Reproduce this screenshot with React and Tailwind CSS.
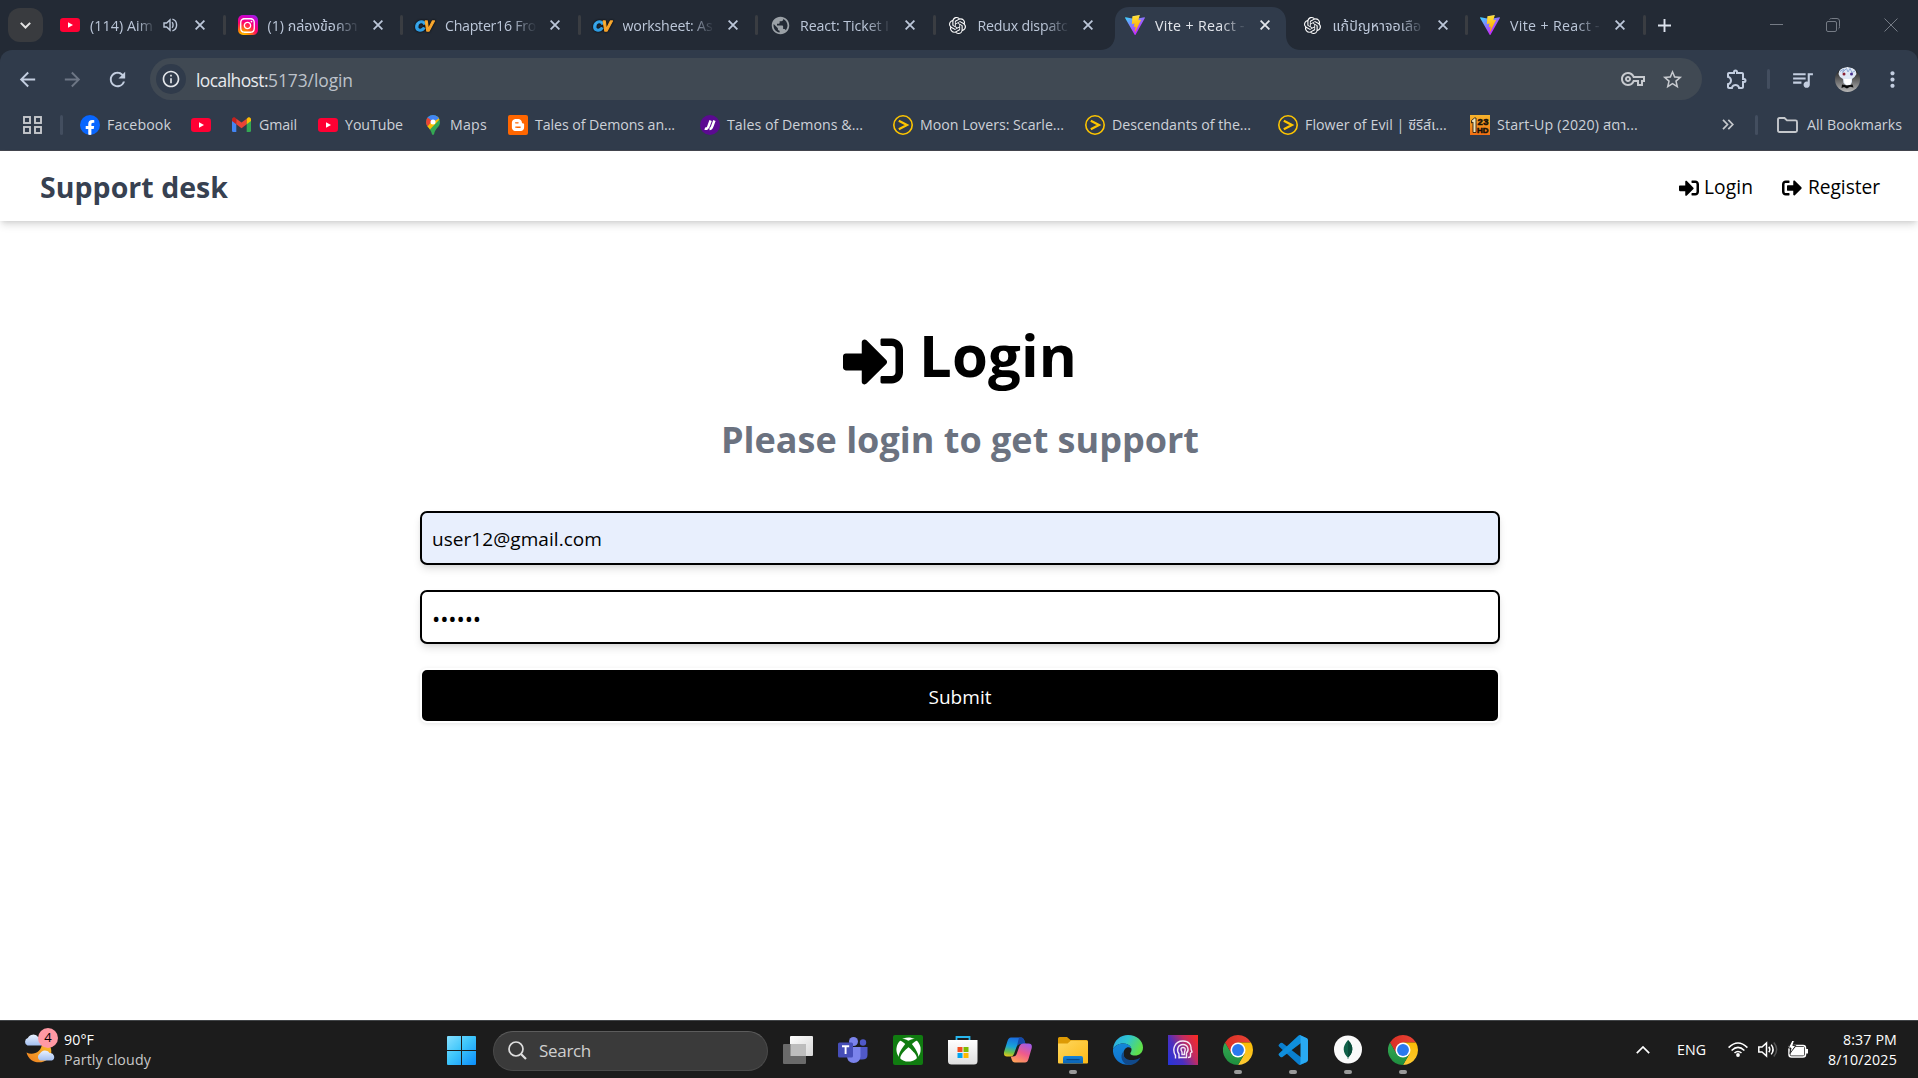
import React, { useLayoutEffect, useRef, useState } from "react";
import { FaSignInAlt, FaSignOutAlt, FaInstagram, FaFacebookF, FaXbox, FaBloggerB } from "react-icons/fa";
import { SiOpenai } from "react-icons/si";
import {
  MdPublic,
  MdArrowBack,
  MdArrowForward,
  MdRefresh,
  MdInfoOutline,
  MdStarBorder,
  MdOutlineVpnKey,
  MdOutlineExtension,
  MdQueueMusic,
  MdMoreVert,
} from "react-icons/md";

/* Single line of text whose letter spacing is adjusted so it fills the given width. */
function Fit({ w, className = "", children }) {
  const ref = useRef(null);
  const [ls, setLs] = useState(0);
  useLayoutEffect(() => {
    const natural = ref.current.getBoundingClientRect().width;
    setLs((w - natural) / Array.from(String(children)).length);
  }, [w, children]);
  return (
    <span ref={ref} className={"inline-block shrink-0 whitespace-pre " + className} style={{ letterSpacing: ls + "px" }}>
      {children}
    </span>
  );
}

function YouTube() {
  return (
    <svg className="h-5 w-5 shrink-0" viewBox="0 0 20 20">
      <rect x="0" y="3" width="20" height="14" rx="3.2" fill="#ff0033" />
      <path d="M8 7.2 13 10 8 12.8Z" fill="#fff" />
    </svg>
  );
}

function Instagram() {
  return (
    <span className="flex h-5 w-5 shrink-0 items-center justify-center rounded-[5px] bg-[radial-gradient(circle_at_25%_110%,#ffd600_0%,#ff8a00_25%,#ff0069_55%,#d300c5_78%,#7638fa_100%)]">
      <FaInstagram className="h-[17px] w-[17px] text-white" />
    </span>
  );
}

function CvLogo() {
  return (
    <svg className="h-5 w-5 shrink-0 overflow-visible drop-shadow-[0_0_1px_#000]" viewBox="0 0 20 20" fontFamily="'Liberation Sans', sans-serif" fontWeight="700" fontStyle="italic" fontSize="15.500" strokeWidth="1.300" strokeLinejoin="round">
      <defs>
        <linearGradient id="cvBlue" x1="0" y1="0" x2="0" y2="1">
          <stop offset="0" stopColor="#7ed3ff" />
          <stop offset="1" stopColor="#1487d8" />
        </linearGradient>
        <linearGradient id="cvOrange" x1="0" y1="0" x2="0" y2="1">
          <stop offset="0" stopColor="#ffd257" />
          <stop offset="1" stopColor="#f08c12" />
        </linearGradient>
      </defs>
      <text x="0" y="15.500" textLength="10.500" lengthAdjust="spacingAndGlyphs" fill="url(#cvBlue)" stroke="#2f9fe6">C</text>
      <text x="9" y="15.500" textLength="9.500" lengthAdjust="spacingAndGlyphs" fill="url(#cvOrange)" stroke="#f7a32b">V</text>
    </svg>
  );
}

function Vite() {
  return (
    <svg className="h-5 w-5 shrink-0" viewBox="0 0 256 257">
      <defs>
        <linearGradient id="viteA" x1="0" x2=".58" y1=".07" y2=".79">
          <stop offset="0" stopColor="#41D1FF" />
          <stop offset="1" stopColor="#BD34FE" />
        </linearGradient>
        <linearGradient id="viteB" x1=".43" x2=".5" y1=".02" y2=".9">
          <stop offset="0" stopColor="#FFEA83" />
          <stop offset=".083" stopColor="#FFDD35" />
          <stop offset="1" stopColor="#FFA800" />
        </linearGradient>
      </defs>
      <path fill="url(#viteA)" d="M255.153 37.938L134.897 252.976c-2.483 4.44-8.862 4.466-11.382.048L.875 37.958c-2.746-4.814 1.371-10.646 6.827-9.67l120.385 21.517a6.537 6.537 0 0 0 2.322-.004l117.867-21.483c5.438-.991 9.574 4.796 6.877 9.62Z" />
      <path fill="url(#viteB)" d="M185.432.063L96.44 17.501a3.268 3.268 0 0 0-2.634 3.014l-5.474 92.456a3.268 3.268 0 0 0 3.997 3.378l24.777-5.718c2.318-.535 4.413 1.507 3.936 3.838l-7.361 36.047c-.495 2.426 1.782 4.5 4.151 3.78l15.304-4.649c2.372-.72 4.652 1.36 4.15 3.788l-11.698 56.621c-.732 3.542 3.979 5.473 5.943 2.437l1.313-2.028l72.516-144.72c1.215-2.423-.88-5.186-3.54-4.672l-25.505 4.922c-2.396.462-4.435-1.77-3.759-4.114l16.646-57.705c.677-2.35-1.37-4.583-3.769-4.113Z" />
    </svg>
  );
}

function Cross({ className = "" }) {
  return (
    <svg className={"h-[10px] w-[10px] shrink-0 " + className} viewBox="0 0 10 10" stroke="currentColor" strokeWidth="1.8">
      <path d="M.6.6 9.4 9.4M9.4.6.6 9.4" />
    </svg>
  );
}

function Speaker() {
  return (
    <svg className="h-[14px] w-[15px] shrink-0" viewBox="0 0 15 14" fill="none" stroke="currentColor" strokeWidth="1.4">
      <path d="M1 5h2.6L7 1.9v10.2L3.6 9H1Z" />
      <path d="M9 4.2c1.4 1 1.4 4.6 0 5.6M9.4 1.2c5.600 1.600 5.600 10 0 11.600" />
    </svg>
  );
}

const OpenAi = () => (
  <span className="flex h-5 w-5 shrink-0 items-center justify-center text-white">
    <SiOpenai className="h-[17px] w-[17px]" />
  </span>
);

const tabs = [
  { icon: <YouTube />, label: "(114) Aim", w: 63, audio: true },
  { icon: <Instagram />, label: "(1) กล่องข้อควา", w: 90 },
  { icon: <CvLogo />, label: "Chapter16 Fro", w: 91 },
  { icon: <CvLogo />, label: "worksheet: As", w: 90 },
  { icon: <span className="flex h-5 w-5 shrink-0 items-center justify-center"><MdPublic className="h-[21px] w-[21px] shrink-0 text-[#9aa0a6]" /></span>, label: "React: Ticket I", w: 89 },
  { icon: <OpenAi />, label: "Redux dispatc", w: 90 },
  { icon: <Vite />, label: "Vite + React -", w: 90, active: true },
  { icon: <OpenAi />, label: "แก้ปัญหาจอเลือ", w: 89 },
  { icon: <Vite />, label: "Vite + React -", w: 90 },
];

function Tab({ t, sep }) {
  return (
    <div className="relative flex h-[50px] w-[177.500px] shrink-0 items-center pl-3">
      {t.active && (
        <svg className="absolute top-[7px] -left-[13px] h-[43px] w-[204px]" viewBox="0 0 204 43" fill="#303b4b">
          <path d="M0 43C9 43 15 37 15 28V14C15 6 21 0 29 0H172C180 0 186 6 186 14V28C186 37 192 43 201 43Z" />
        </svg>
      )}
      <div className={"relative flex w-full items-center " + (t.active ? "text-[#e3e6ec]" : "text-[#bcc7d9]")}>
        {t.icon}
        <div
          className={
            "ml-[10px] pt-px text-[14.2px] leading-6 [mask-image:linear-gradient(to_right,#000_72%,transparent)] " +
            (t.audio ? "w-[66px]" : "w-[92px]")
          }
        >
          <Fit w={t.w}>{t.label}</Fit>
        </div>
        {t.audio && (
          <span className="ml-[7px] flex">
            <Speaker />
          </span>
        )}
        <Cross className={t.audio ? "ml-[17px]" : "ml-[13px]"} />
        {sep && <span className="ml-auto h-5 w-[3px] rounded bg-[#3a3d42]" />}
      </div>
    </div>
  );
}

function ArrowBadge() {
  return (
    <svg className="h-5 w-5 shrink-0" viewBox="0 0 20 20" fill="none" stroke="#fdc500">
      <circle cx="10" cy="10" r="9.2" strokeWidth="1.6" />
      <path d="M5.800 5.800 14 10 5.800 14.200" strokeWidth="2.200" />
    </svg>
  );
}

const Facebook = () => (
  <span className="flex h-5 w-5 shrink-0 items-end justify-center overflow-hidden rounded-full bg-[#0866ff]">
    <FaFacebookF className="h-4 w-4 translate-y-px text-white" />
  </span>
);

const Gmail = () => (
  <svg className="h-[15px] w-[19px] shrink-0" viewBox="0 0 19 15">
    <path d="M0 2.500V13.700Q0 15 1.300 15H4.300V5.500Z" fill="#4285f4" />
    <path d="M14.700 5.500V15H17.700Q19 15 19 13.700V2.500Z" fill="#34a853" />
    <path d="M0 2.500V4L4.300 7.300V1.700L3 .6C1.500-.4 0 .7 0 2.500Z" fill="#c5221f" />
    <path d="M4.300 1.700 9.500 5.500 14.700 1.700V7.300L9.500 11.200 4.300 7.300Z" fill="#ea4335" />
    <path d="M19 2.500V4L14.700 7.300V1.700L16 .6C17.500-.4 19 .7 19 2.500Z" fill="#fbbc04" />
  </svg>
);

const MapsPin = () => (
  <svg className="h-5 w-[14px] shrink-0" viewBox="0 0 14 20">
    <defs>
      <clipPath id="pin">
        <path d="M7 0a7 7 0 0 1 7 7c0 5-5 6.500-5.800 11.800Q7 21.200 5.800 18.800C5 13.500 0 12 0 7A7 7 0 0 1 7 0Z" />
      </clipPath>
    </defs>
    <g clipPath="url(#pin)">
      <path d="M0 0H14V20H0Z" fill="#34a853" />
      <path d="M-1 13.500 7 4 14 -1H15L15 3 2.500 16Z" fill="#fbbc04" />
      <path d="M-1 -1H15V2L7 7 4 8 0 3Z" fill="#4285f4" />
      <path d="M-1 0 1.600 2.400 6 6 1.500 11.500H-1Z" fill="#ea4335" />
      <path d="M14 3 V9L8 20H16V3Z" fill="#34a853" />
    </g>
    <circle cx="7" cy="7" r="2.500" fill="#fff" />
  </svg>
);

const Blogger = () => (
  <span className="flex h-5 w-5 shrink-0 items-center justify-center rounded-[2px] bg-[#ff6600]">
    <FaBloggerB className="h-[14px] w-[14px] text-white" />
  </span>
);

const PurpleSlash = () => (
  <svg className="h-5 w-5 shrink-0" viewBox="0 0 20 20">
    <circle cx="10" cy="10" r="10" fill="#5b0a91" />
    <path d="M4.800 13.500Q7.500 14.500 8.600 11L10.600 5.500M9.500 14Q11.500 14 12.400 11L14.400 5.500" stroke="#fff" strokeWidth="2.500" fill="none" />
  </svg>
);

const Hd123 = () => (
  <svg className="h-5 w-5 shrink-0" viewBox="0 0 20 20" fontFamily="'Liberation Sans', sans-serif" fontWeight="700">
    <defs>
      <linearGradient id="hd" x1="0" y1="0" x2="0" y2="1">
        <stop offset="0" stopColor="#f7b52c" />
        <stop offset="1" stopColor="#f36f12" />
      </linearGradient>
    </defs>
    <rect width="20" height="20" fill="url(#hd)" />
    <path d="M1.500 5.500 4.500 3H6V17.500H3V7L1.500 8Z" fill="#f3e3b4" stroke="#1a1208" strokeWidth=".8" />
    <text x="7.500" y="9.600" fontSize="9.500" textLength="11" fill="#16110a" stroke="#16110a" strokeWidth=".6">23</text>
    <text x="7" y="17.500" fontSize="8" textLength="11.500" lengthAdjust="spacingAndGlyphs" fill="#16110a" stroke="#16110a" strokeWidth=".6">HD</text>
  </svg>
);

const bookmarks = [
  { icon: <Facebook />, cls: "w-[111px] gap-[7px]", label: "Facebook", w: 64 },
  { icon: <YouTube />, cls: "w-[41px]" },
  { icon: <Gmail />, cls: "w-[86px] gap-2", label: "Gmail", w: 38 },
  { icon: <YouTube />, cls: "w-[108px] gap-[7px]", label: "YouTube", w: 58 },
  { icon: <MapsPin />, cls: "w-[82px] gap-[10px]", label: "Maps", w: 37 },
  { icon: <Blogger />, cls: "w-[192px] gap-[7px]", label: "Tales of Demons an...", w: 140 },
  { icon: <PurpleSlash />, cls: "w-[193px] gap-[7px]", label: "Tales of Demons &...", w: 136 },
  { icon: <ArrowBadge />, cls: "w-[192px] gap-[7px]", label: "Moon Lovers: Scarle...", w: 144 },
  { icon: <ArrowBadge />, cls: "w-[193px] gap-[7px]", label: "Descendants of the...", w: 139 },
  { icon: <ArrowBadge />, cls: "w-[192px] gap-[7px]", label: "Flower of Evil | ซีรีส์เ...", w: 142 },
  { icon: <Hd123 />, cls: "w-[250px] gap-[7px]", label: "Start-Up (2020) สตา...", w: 141 },
];

function Browser() {
  return (
    <div className="flex h-[151px] shrink-0 flex-col bg-[#232a35]">
      <div className="flex h-[50px] items-center pl-2">
        <button className="flex h-[34px] w-[35px] shrink-0 items-center justify-center rounded-[12px] bg-[#393b3f] text-[#e3e3e3]">
          <svg className="h-[7px] w-[11px]" viewBox="0 0 11 7" fill="none" stroke="currentColor" strokeWidth="2">
            <path d="M.8.9 5.500 5.500 10.200.9" />
          </svg>
        </button>
        <div className="ml-[5px] flex">
          {tabs.map((t, i) => (
            <Tab key={i} t={t} sep={i !== 5 && i !== 6} />
          ))}
        </div>
        <svg className="ml-[12px] h-[13px] w-[13px] shrink-0" viewBox="0 0 13 13" stroke="#dde3ee" strokeWidth="1.900">
          <path d="M6.500 0V13M0 6.500H13" />
        </svg>
        <div className="mr-[20px] ml-auto flex items-center text-[#757b85]">
          <svg className="h-[13px] w-[13px]" viewBox="0 0 13 13" stroke="currentColor"><path d="M0 5.500H13" /></svg>
          <svg className="ml-[43px] h-[14px] w-[14px]" viewBox="0 0 14 14" fill="none" stroke="currentColor">
            <rect x=".5" y="3.500" width="10" height="10" rx="1.500" />
            <path d="M3.500 1.500Q4 .5 5.500.5H11Q13.500.5 13.500 3V8.500Q13.500 10.500 12.500 10.800" />
          </svg>
          <svg className="ml-[44px] h-[14px] w-[14px]" viewBox="0 0 14 14" stroke="currentColor"><path d="M.5.5 13.500 13.500M13.500.5.5 13.500" /></svg>
        </div>
      </div>
      <div className="flex flex-1 flex-col rounded-t-[12px] border-b border-[#44464f] bg-[#303b4b] pt-2">
        <div className="flex h-[42px] items-center pl-4 text-[#c3cee0]">
          <MdArrowBack className="h-[23px] w-[23px] shrink-0" />
          <MdArrowForward className="ml-[22px] h-[23px] w-[23px] shrink-0 text-[#6d7685]" />
          <MdRefresh className="ml-[22px] h-[23px] w-[23px] shrink-0" />
          <div className="ml-[21px] flex h-[42px] w-[1552px] shrink-0 items-center rounded-full bg-[#404953] pl-[6px]">
            <span className="flex h-[30px] w-[30px] shrink-0 items-center justify-center rounded-full bg-[#303b4b] text-[#e3e6ea]">
              <MdInfoOutline className="h-5 w-5" />
            </span>
            <span className="mt-[2px] ml-[10px] text-[17.400px] leading-6 text-[#e8eaed]"><Fit w={72}>localhost:</Fit></span>
            <span className="mt-[2px] text-[17.400px] leading-6 text-[#bdc2ca]"><Fit w={85}>5173/login</Fit></span>
            <MdOutlineVpnKey className="ml-auto h-6 w-6 text-[#c7cacf]" />
            <MdStarBorder className="mr-[18px] ml-4 h-[23px] w-[23px] text-[#c7cacf]" />
          </div>
          <MdOutlineExtension className="ml-[23px] h-[24px] w-[24px] shrink-0" />
          <span className="ml-[18px] h-5 w-[3px] shrink-0 rounded bg-[#434e5f]" />
          <MdQueueMusic className="ml-[20px] h-[25px] w-[25px] shrink-0" />
          <svg className="ml-[20px] h-[25px] w-[25px] shrink-0" viewBox="0 0 25 25">
            <defs>
              <clipPath id="avatar"><circle cx="12.500" cy="12.500" r="12.500" /></clipPath>
              <linearGradient id="avBg" x1="0" y1="0" x2="0" y2="1"><stop offset="0" stopColor="#0c0c0d" /><stop offset="1" stopColor="#b5b5b5" /></linearGradient>
            </defs>
            <g clipPath="url(#avatar)">
              <rect width="25" height="25" fill="url(#avBg)" />
              <path d="M3.500 7Q4 0 12.500 0T21.500 7L19.500 10 17 12 17 15 15.500 18 11.500 18.500 8.500 16 8 12 5 10Z" fill="#dfe8f5" />
              <path d="M9 12 16.500 12 15.500 17.500 11.500 18 9.500 16Z" fill="#fff" />
              <path d="M5 4.500 9 2 7.500 5.500 11.500 1.500 13 5 15 1.500 17 5.500 20 4" stroke="#92abd4" fill="none" strokeWidth="1" />
              <circle cx="9" cy="7" r="1.500" fill="#8a2133" /><circle cx="16.500" cy="7" r="1.500" fill="#49308c" />
              <path d="M7 17.500 12 18.500 17.500 17.500 18.500 20.500 15 19.800 12 21.500 9 20 6.500 21Z" fill="#0a0a0a" />
            </g>
          </svg>
          <MdMoreVert className="ml-[20px] h-[25px] w-[25px] shrink-0" />
        </div>
        <div className="flex h-[49px] items-center pl-[23px] text-[14.200px] leading-6 text-[#cdd1d8]">
          <svg className="h-[18px] w-[19px] shrink-0" viewBox="0 0 19 18" fill="none" stroke="#c5c8cc" strokeWidth="1.900">
            <rect x="1" y="1" width="6" height="6" /><rect x="12" y="1" width="6" height="6" />
            <rect x="1" y="11" width="6" height="6" /><rect x="12" y="11" width="6" height="6" />
          </svg>
          <span className="mr-[17px] ml-[18px] h-5 w-[3px] shrink-0 rounded bg-[#434e5f]" />
          {bookmarks.map((b, i) => (
            <div key={i} className={"flex shrink-0 items-center " + b.cls}>
              {b.icon}
              {b.label && <Fit w={b.w}>{b.label}</Fit>}
            </div>
          ))}
          <svg className="ml-[2px] h-[11px] w-[12px] shrink-0" viewBox="0 0 12 11" fill="none" stroke="#c5c8cc" strokeWidth="1.700">
            <path d="M1 .8 5.500 5.500 1 10.200M6.300.8 10.800 5.500 6.300 10.200" />
          </svg>
          <span className="ml-[21px] h-5 w-[3px] shrink-0 rounded bg-[#434e5f]" />
          <svg className="ml-[19px] h-[16px] w-[21px] shrink-0" viewBox="0 0 21 16" fill="none" stroke="#c5c8cc" strokeWidth="1.900">
            <path d="M1 2.500Q1 1 2.500 1H7.500L10 3.400H18.500Q20 3.400 20 4.900V13.500Q20 15 18.500 15H2.500Q1 15 1 13.500Z" />
          </svg>
          <Fit w={95} className="ml-[9px]">All Bookmarks</Fit>
        </div>
      </div>
    </div>
  );
}

function Page() {
  return (
    <div className="flex flex-1 flex-col bg-white text-black">
      <nav className="flex h-[70px] shrink-0 items-center justify-between pt-[2px] pr-[38px] pl-10 shadow-[0_5px_8px_-1px_rgba(0,0,0,0.13),0_2px_5px_-2px_rgba(0,0,0,0.12)]">
        <span className="text-[28.500px] font-bold text-[#374151]"><Fit w={188}>Support desk</Fit></span>
        <div className="flex items-center text-[19.200px]">
          <FaSignInAlt className="mt-[3px] h-5 w-5" />
          <Fit w={49} className="ml-[5px]">Login</Fit>
          <FaSignOutAlt className="mt-[3px] ml-[29px] h-5 w-5" />
          <Fit w={72} className="ml-[6px]">Register</Fit>
        </div>
      </nav>
      <main className="mt-[90px] ml-[420px] flex w-[1080px] flex-col items-center">
        <h1 className="flex h-[90px] items-center text-[58px] leading-[90px] font-bold">
          <FaSignInAlt className="mt-[9px] h-[60px] w-[60px]" />
          <Fit w={158} className="-mt-[3px] ml-[16px]">Login</Fit>
        </h1>
        <p className="mt-[14px] flex h-[50px] items-center text-[36px] leading-[50px] font-bold text-[#6b7280]">
          <Fit w={478}>Please login to get support</Fit>
        </p>
        <form className="mt-[46px] flex w-full flex-col text-[19px] leading-[30px]">
          <div className="flex h-[54px] items-center rounded-[7px] border-2 border-black bg-[#e8effd] px-[10px] pt-[2px] shadow-[0_5px_8px_-1px_rgba(0,0,0,0.12),0_2px_5px_-2px_rgba(0,0,0,0.1)]">
            <Fit w={170}>user12@gmail.com</Fit>
          </div>
          <div className="mt-[25px] flex h-[54px] items-center rounded-[7px] border-2 border-black bg-white px-[10px] shadow-[0_5px_8px_-1px_rgba(0,0,0,0.12),0_2px_5px_-2px_rgba(0,0,0,0.1)]">
            <Fit w={49} className="mt-[2px] text-[22px]">••••••</Fit>
          </div>
          <button type="button" className="mt-[24px] flex h-[55px] items-center justify-center rounded-[7px] border-[2.500px] border-white bg-black pt-[2px] text-white shadow-[0_1px_4px_rgba(0,0,0,0.10)]">
            <Fit w={63}>Submit</Fit>
          </button>
        </form>
      </main>
    </div>
  );
}

function Weather() {
  return (
    <div className="relative -mt-1 h-[40px] w-[35px] shrink-0">
      <svg className="h-full w-full" viewBox="0 0 35 40">
        <defs>
          <linearGradient id="cloud" x1="0" y1="0" x2="0" y2="1"><stop offset="0" stopColor="#e9f2ff" /><stop offset="1" stopColor="#a3bff0" /></linearGradient>
          <linearGradient id="moon" x1="1" y1="0" x2="0" y2="1"><stop offset="0" stopColor="#fbc02d" /><stop offset="1" stopColor="#ee7d20" /></linearGradient>
        </defs>
        <path d="M26 18C28 22 28 28 24 31 17 37 5 35 2.500 24.500 9 28 18 24 18 15Z" fill="url(#moon)" />
        <path d="M3.500 17.500a4 4 0 0 1 .3-7.500A6 6 0 0 1 14 9a4.500 4.500 0 0 1 3 8.500Z" fill="url(#cloud)" />
        <path d="M16 32.500a4 4 0 0 1 0-7A5.500 5.500 0 0 1 25.500 25a4 4 0 0 1 2.500 7.500Z" fill="url(#cloud)" />
      </svg>
      <span className="absolute top-0 left-[14px] flex h-5 w-5 items-center justify-center rounded-full bg-[#ff99a4] text-[13px] text-black">4</span>
    </div>
  );
}

const TaskView = () => (
  <svg className="h-[30px] w-[30px]" viewBox="0 0 30 30">
    <defs><linearGradient id="tv" x1="0" y1="0" x2="1" y2="1"><stop offset="0" stopColor="#fff" /><stop offset="1" stopColor="#d6d6d6" /></linearGradient></defs>
    <rect x="7" y="1" width="23" height="20" rx="1" fill="url(#tv)" />
    <rect x="0" y="9" width="23" height="20" rx="1" fill="#6a6a6a" />
    <rect x="7.500" y="9" width="15.500" height="12" fill="#bdbdbd" />
  </svg>
);

const Teams = () => (
  <svg className="h-[30px] w-[30px]" viewBox="0 0 30 30">
    <circle cx="15.500" cy="6.500" r="4.500" fill="#7b83eb" />
    <circle cx="25" cy="7.500" r="3.200" fill="#5059c9" />
    <path d="M20 12H29.500V20Q29.500 24.500 24 24.500H20Z" fill="#5059c9" />
    <path d="M9 12H22.500V21.500Q22 28 15.700 28T9 21.500Z" fill="#7b83eb" />
    <rect x="0" y="7.500" width="15" height="15" rx="1.500" fill="#464eb8" />
    <path d="M4 11.200H11.200M7.600 11.200V19" stroke="#fff" strokeWidth="1.900" />
  </svg>
);

const Xbox = () => (
  <span className="flex h-[30px] w-[30px] items-center justify-center rounded-[2px] bg-[#107c10]">
    <FaXbox className="h-[25px] w-[25px] text-white" />
  </span>
);

const Store = () => (
  <svg className="h-[30px] w-[30px]" viewBox="0 0 30 30">
    <defs><linearGradient id="st" x1="0" y1="0" x2="0" y2="1"><stop offset="0" stopColor="#fff" /><stop offset="1" stopColor="#dedede" /></linearGradient></defs>
    <path d="M8.500 7V2H21.500V7" fill="none" stroke="#28b7ee" strokeWidth="1.800" />
    <path d="M0 5H29.500V26Q29.500 29.500 26 29.500H3.500Q0 29.500 0 26Z" fill="url(#st)" />
    <path d="M9.500 12H14.500V17H9.500Z" fill="#f25022" /><path d="M15.500 12H20.500V17H15.500Z" fill="#7fba00" />
    <path d="M9.500 18H14.500V23H9.500Z" fill="#00a4ef" /><path d="M15.500 18H20.500V23H15.500Z" fill="#ffb900" />
  </svg>
);

const Copilot = () => (
  <svg className="h-[30px] w-[30px]" viewBox="0 0 30 30">
    <defs>
      <linearGradient id="cpA" x1=".3" y1="0" x2=".1" y2="1"><stop offset="0" stopColor="#1a6fe0" /><stop offset=".45" stopColor="#18a3d8" /><stop offset=".75" stopColor="#6cc04a" /><stop offset="1" stopColor="#f3c515" /></linearGradient>
      <linearGradient id="cpB" x1=".8" y1="0" x2=".3" y2="1"><stop offset="0" stopColor="#a05be8" /><stop offset=".5" stopColor="#ef5a8c" /><stop offset="1" stopColor="#ff9f5a" /></linearGradient>
    </defs>
    <path d="M8 2.500H18Q20.500 2.500 21.500 6L22.500 9H17Q14.500 9 13.500 12L11 19Q10 21.500 7.500 21.500H4Q0 21.500 1.200 16.500L4.500 6Q5.500 2.500 8 2.500Z" fill="url(#cpA)" />
    <path d="M16 2.500H18Q20.500 2.500 21.500 6L22.500 9H17Q15 9 14 11Z" fill="#1649a8" />
    <path d="M22 27.500H12Q9.500 27.500 8.500 24L7.800 21.500H10Q13 21.500 14 18L16.500 11Q17.500 8.500 20 8.500H25.500Q29.800 8.500 28.600 13.500L25.500 24Q24.500 27.500 22 27.500Z" fill="url(#cpB)" />
  </svg>
);

const Explorer = () => (
  <svg className="h-[30px] w-[30px]" viewBox="0 0 30 30">
    <defs>
      <linearGradient id="exA" x1="0" y1="0" x2="1" y2="1"><stop offset="0" stopColor="#ffd75e" /><stop offset="1" stopColor="#fbb917" /></linearGradient>
      <linearGradient id="exB" x1="0" y1="0" x2="0" y2="1"><stop offset="0" stopColor="#1583d8" /><stop offset="1" stopColor="#0a62b3" /></linearGradient>
    </defs>
    <path d="M0 3.500Q0 2 1.500 2H9L12.500 5H28.500Q30 5 30 7V12H0Z" fill="#dd9a04" />
    <path d="M0 8.500H9.500L13 5.500H28.500Q30 5.500 30 7V27.500Q30 28.500 29 28.500H1Q0 28.500 0 27.500Z" fill="url(#exA)" />
    <path d="M5 28.500V23Q5 21 7 21H23Q25 21 25 23V28.500Z" fill="url(#exB)" />
    <path d="M8.500 24.700H21.500" stroke="#063f7d" />
  </svg>
);

const Edge = () => (
  <svg className="h-[30px] w-[30px]" viewBox="0 0 30 30">
    <defs>
      <linearGradient id="edA" x1="0" y1="0" x2="1" y2=".4"><stop offset="0" stopColor="#2aa5e8" /><stop offset=".5" stopColor="#2fc6cf" /><stop offset="1" stopColor="#5fe04b" /></linearGradient>
      <linearGradient id="edB" x1="0" y1="0" x2=".2" y2="1"><stop offset="0" stopColor="#1489d8" /><stop offset="1" stopColor="#1173cf" /></linearGradient>
    </defs>
    <path d="M0 14C1 5 7.500 0 15 0 24 0 30 6 30 12.500 30 18 26 20.500 22 20.500 18 20.500 16.800 19 17.500 17.800 20.500 14 17 8.500 10.500 8.500 5 8.500 1.500 11 0 14Z" fill="url(#edA)" />
    <path d="M0 14C2 10.500 6 8.500 10.500 8.500 15 8.500 18 11 18.300 13.500 15 10.500 10.500 13.500 10.500 18.500 10.500 25 17 30 20 29C10 32.500-1 25 0 14Z" fill="url(#edB)" />
    <path d="M10.800 16.500C8.500 24 18 28 27.500 22.500 25.500 27 21 30 16 30 9 29.500 6 20 10.800 16.500Z" fill="#114a8b" />
  </svg>
);

const HeadApp = () => (
  <span className="flex h-[30px] w-[30px] items-center justify-center bg-[linear-gradient(60deg,#2635d8_0%,#4a2fc0_35%,#c02c63_65%,#ff2a1e_100%)]">
    <svg className="h-[22px] w-[22px]" viewBox="0 0 22 22" fill="none" stroke="#f4e9f5" strokeWidth="1.400">
      <path d="M3.500 19.500V16.500C0 11 2 2 11 2 17 2 19.500 6 19 10L20 13 18.500 14V17Q18.500 18.500 16 18.500" />
      <path d="M7 19.500V15C4 11 6 5.500 11 5.500S17.500 11 14.500 14V18.500H7" />
      <path d="M10 15.500V13Q7.500 8.500 11 8.500T12.500 13V15.500Z" />
    </svg>
  </span>
);

const Chrome = () => (
  <svg className="h-[30px] w-[30px]" viewBox="0 0 48 48">
    <defs>
      <linearGradient id="chR" x1="0" y1="0" x2="1" y2="0"><stop offset="0" stopColor="#d93025" /><stop offset="1" stopColor="#ea4335" /></linearGradient>
      <linearGradient id="chG" x1="0" y1="1" x2="0" y2="0"><stop offset="0" stopColor="#1e8e3e" /><stop offset="1" stopColor="#34a853" /></linearGradient>
      <linearGradient id="chY" x1="0" y1="1" x2="0" y2="0"><stop offset="0" stopColor="#fcc934" /><stop offset="1" stopColor="#fbbc04" /></linearGradient>
    </defs>
    <path d="M24 12H44.780A24 24 0 0 0 3.215 12L13.610 30Z" fill="url(#chR)" />
    <path d="M34.390 30 24 48A24 24 0 0 0 44.780 12H24Z" fill="url(#chY)" />
    <path d="M13.610 30 3.215 12A24 24 0 0 0 24 48L34.390 30Z" fill="url(#chG)" />
    <circle cx="24" cy="24" r="12" fill="#fff" />
    <circle cx="24" cy="24" r="9.500" fill="#2a79ef" />
  </svg>
);

const VsCode = () => (
  <svg className="h-[30px] w-[30px]" viewBox="0 0 30 30">
    <path d="M1 9.500 2.500 8Q3.500 7.500 4.500 8L29 27 22 30Q21 30 20 29L1 11.500Q0 10.500 1 9.500Z" fill="#0a7fcf" />
    <path d="M1 20.500 2.500 22Q3.500 22.500 4.500 22L29 3.500 22 0Q21 0 20 1L1 18.500Q0 19.500 1 20.500Z" fill="#0f8fdd" />
    <path d="M21.500 0 28.500 3Q30 3.700 30 5V25Q30 26.300 28.500 27L21.500 30Q22.500 29.500 22.500 28V2Q22.500.5 21.500 0Z" fill="#29aaf3" />
  </svg>
);

const Mongo = () => (
  <svg className="h-[30px] w-[30px]" viewBox="0 0 30 30">
    <circle cx="15" cy="14.500" r="14" fill="#fafafa" />
    <path d="M15 5C18.500 8.500 19.500 11.500 19.300 14.500 19.200 18 17 21 15.300 22.500V24H14.700V22.500C13 21 10.800 18 10.700 14.500 10.500 11.500 12 8.500 15 5Z" fill="#116149" />
    <path d="M15 5C18.500 8.500 19.500 11.500 19.300 14.500 19.200 18 17 21 15 22.500Z" fill="#0a4c3a" />
  </svg>
);

const apps = [
  { el: <TaskView /> },
  { el: <Teams /> },
  { el: <Xbox /> },
  { el: <Store /> },
  { el: <Copilot /> },
  { el: <Explorer />, open: true },
  { el: <Edge /> },
  { el: <HeadApp /> },
  { el: <Chrome />, open: true },
  { el: <VsCode />, open: true },
  { el: <Mongo />, open: true },
  { el: <Chrome />, open: true },
];

function Taskbar() {
  return (
    <div className="flex h-[58px] shrink-0 items-center border-t border-[#414447] bg-[#1c1c1c] text-[14.200px] text-white">
      <div className="flex w-[447px] shrink-0 items-center pl-[24px]">
        <Weather />
        <div className="ml-[5px] flex flex-col items-start leading-5">
          <Fit w={30}>90°F</Fit>
          <Fit w={87} className="text-[#c8c8c8]">Partly cloudy</Fit>
        </div>
      </div>
      <svg className="mt-[2px] h-[29px] w-[29px] shrink-0" viewBox="0 0 29 29">
        <defs><linearGradient id="win" x1="0" y1="0" x2="1" y2="1"><stop offset="0" stopColor="#86e0ff" /><stop offset=".45" stopColor="#3fc6fb" /><stop offset="1" stopColor="#0a8dfb" /></linearGradient></defs>
        <path d="M1 0H14V14H0V1Q0 0 1 0ZM15 0H28Q29 0 29 1V14H15ZM0 15H14V29H1Q0 29 0 28ZM15 15H29V28Q29 29 28 29H15Z" fill="url(#win)" />
      </svg>
      <div className="mt-[2px] ml-[17px] flex h-[40px] w-[275px] shrink-0 items-center rounded-full border border-[#4a4a4a] border-t-[#5c5c5c] bg-[#3a3a3a] pl-[14px]">
        <svg className="h-[19px] w-[19px] shrink-0" viewBox="0 0 19 19" fill="none" stroke="#dedede">
          <circle cx="8" cy="8" r="7" strokeWidth="1.700" />
          <path d="M13 13 18 18" strokeWidth="2.200" />
        </svg>
        <Fit w={52} className="ml-3 text-[17px] text-[#cfcfcf]">Search</Fit>
      </div>
      <div className="ml-[2.500px] flex">
        {apps.map((a, i) => (
          <div key={i} className="relative flex h-[57px] w-[55px] items-center justify-center">
            <span>{a.el}</span>
            {a.open && <span className="absolute bottom-[4px] left-[23px] h-1 w-2 rounded-full bg-[#9a9a9a]" />}
          </div>
        ))}
      </div>
      <div className="mr-[21px] ml-auto flex items-center">
        <svg className="h-[8px] w-[14px]" viewBox="0 0 14 8" fill="none" stroke="#fff" strokeWidth="1.700"><path d="M.8 7.200 7 1 13.200 7.200" /></svg>
        <Fit w={29} className="mt-px ml-[27px]">ENG</Fit>
        <svg className="ml-[22px] h-[15px] w-5" viewBox="0 0 20 15" fill="none" stroke="#fff" strokeWidth="1.600">
          <path d="M.6 5.600Q10-3.600 19.400 5.600M3.600 8.500Q10 2.400 16.400 8.500M6.500 11Q10 8 13.500 11" />
          <circle cx="10" cy="13" r="1.900" fill="#fff" stroke="none" />
        </svg>
        <svg className="ml-[10px] h-[17px] w-5" viewBox="0 0 20 17" fill="none" stroke="#fff" strokeWidth="1.500">
          <path d="M.8 6H4L8.500 2V15L4 11H.8Z" />
          <path d="M10.800 5.800Q12.800 8.500 10.800 11.200M13.200 3.600Q17 8.500 13.200 13.400" />
          <path d="M15.800 1.500Q21.500 8.500 15.800 15.500" stroke="#555" />
        </svg>
        <svg className="ml-[10px] h-[18px] w-5" viewBox="0 0 20 18">
          <rect x="1" y="4.500" width="16.500" height="11.500" rx="2.500" fill="none" stroke="#fff" strokeWidth="1.500" />
          <path d="M2.500 14.500V11L7.500 6H16V14.500Z" fill="#fff" /><path d="M18 8H20V12.500H18Z" fill="#fff" />
          <path d="M4-.5.300 7H3L2 12.500 7.800 4.500H4.800L6.500-.5Z" fill="#fff" stroke="#1c1c1c" strokeWidth=".9" />
        </svg>
        <div className="ml-[20px] flex flex-col items-end leading-5">
          <Fit w={54}>8:37 PM</Fit>
          <Fit w={69}>8/10/2025</Fit>
        </div>
      </div>
    </div>
  );
}

export default function App() {
  return (
    <div className="flex h-[1078px] w-[1918px] flex-col overflow-hidden bg-white font-['Open_Sans','Noto_Sans','Noto_Sans_Thai','Noto_Sans_CJK_SC',sans-serif]">
      <Browser />
      <Page />
      <Taskbar />
    </div>
  );
}
